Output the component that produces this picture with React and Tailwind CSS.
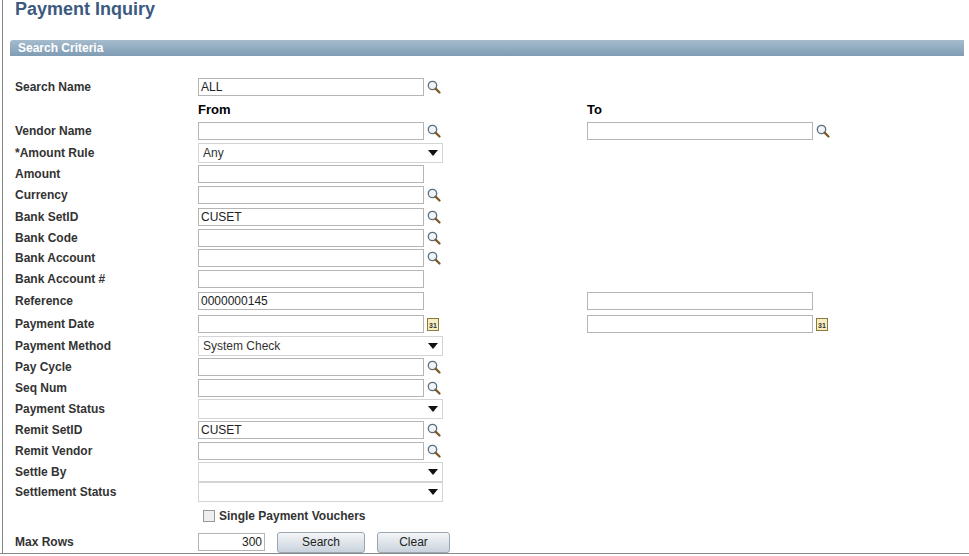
const F = { fontFamily: 'Arial, "Liberation Sans", sans-serif' };

function Lookup() {
  return (
    <svg width="14" height="14" viewBox="0 0 14 14" className="ml-[3px]">
      <circle cx="5.5" cy="5.5" r="4.2" fill="#eef4f8" stroke="#5b6f7e" strokeWidth="1.3" />
      <line x1="8.6" y1="8.6" x2="12.5" y2="12.5" stroke="#7a5a2a" strokeWidth="2.2" strokeLinecap="round" />
    </svg>
  );
}

function Cal() {
  return (
    <svg width="12" height="14" viewBox="0 0 12 14" className="ml-[3px]">
      <rect x="0.5" y="1.5" width="11" height="12" fill="#f6eec0" stroke="#8a7a3a" />
      <text x="2" y="11" fontSize="7" fontWeight="bold" fill="#333" style={F}>31</text>
    </svg>
  );
}

function Input({ value = '', w = 'w-[226px]', right, icon }) {
  return (
    <div className="flex items-center">
      <div className={`${w} h-[18px] border border-[#b5b5b5] bg-white text-[12px] text-[#222] px-[2px] leading-[16px] ${right ? 'text-right' : ''}`}>{value}</div>
      {icon === 'l' && <Lookup />}
      {icon === 'c' && <Cal />}
    </div>
  );
}

function Select({ value = '' }) {
  return (
    <div className="w-[245px] h-[20px] border border-[#d4d4d4] bg-white text-[12px] text-[#333] px-[4px] flex items-center justify-between">
      <span>{value}</span>
      <svg width="10" height="6" viewBox="0 0 10 6"><path d="M0 0h10L5 6z" fill="#111" /></svg>
    </div>
  );
}

const rows = [
  ['Search Name', <Input value="ALL" icon="l" />, null, 20],
  ['', <span className="text-[13px] font-bold text-black">From</span>, <span className="text-[13px] font-bold text-black">To</span>, 23],
  ['Vendor Name', <Input icon="l" />, <Input icon="l" />, 22],
  ['*Amount Rule', <Select value="Any" />, null, 21],
  ['Amount', <Input />, null, 21],
  ['Currency', <Input icon="l" />, null, 21],
  ['Bank SetID', <Input value="CUSET" icon="l" />, null, 23],
  ['Bank Code', <Input icon="l" />, null, 20],
  ['Bank Account', <Input icon="l" />, null, 20],
  ['Bank Account #', <Input />, null, 21],
  ['Reference', <Input value="0000000145" />, <Input />, 24],
  ['Payment Date', <Input icon="c" />, <Input icon="c" />, 22],
  ['Payment Method', <Select value="System Check" />, null, 21],
  ['Pay Cycle', <Input icon="l" />, null, 21],
  ['Seq Num', <Input icon="l" />, null, 22],
  ['Payment Status', <Select />, null, 20],
  ['Remit SetID', <Input value="CUSET" icon="l" />, null, 21],
  ['Remit Vendor', <Input icon="l" />, null, 21],
  ['Settle By', <Select />, null, 21],
  ['Settlement Status', <Select />, null, 20],
  ['', <div className="flex items-center gap-[4px] pl-[5px]"><div className="w-[12px] h-[12px] border border-[#999] bg-[#eee]" /><span className="text-[12px] font-bold text-[#333]">Single Payment Vouchers</span></div>, null, 28],
];

export default function App() {
  return (
    <div className="w-[969px] h-[556px] bg-white relative overflow-hidden" style={F}>
      <div className="absolute left-[2px] top-0 bottom-[3px] w-px bg-[#888]" />
      <div className="absolute left-0 right-0 bottom-[2px] h-px bg-[#888]" />
      <h1 className="text-[18px] font-bold text-[#3b5a80] pl-[15px] pt-0 leading-[18px]">Payment Inquiry</h1>
      <div className="ml-[10px] w-[954px] mt-[22px] h-[16px] bg-gradient-to-b from-[#a6bccd] to-[#7f9cb4] rounded-tl-[3px] text-[12px] font-bold text-white pl-[8px] leading-[16px]">Search Criteria</div>
      <div className="mt-[21px] flex flex-col">
        {rows.map(([label, a, b, h], i) => (
          <div key={i} className="flex items-center" style={{ height: h }}>
            <div className="w-[198px] pl-[15px] text-[12px] font-bold text-[#333]">{label}</div>
            <div className="w-[389px]">{a}</div>
            <div>{b}</div>
          </div>
        ))}
        <div className="flex items-center h-[24px]">
          <div className="w-[198px] pl-[15px] text-[12px] font-bold text-[#333]">Max Rows</div>
          <Input value="300" w="w-[67px]" right />
          <button className="ml-[12px] w-[88px] h-[21px] border border-[#9aa6b2] rounded-[3px] bg-gradient-to-b from-[#f4f6f8] to-[#c9d3dd] text-[12px] text-[#222]">Search</button>
          <button className="ml-[12px] w-[73px] h-[21px] border border-[#9aa6b2] rounded-[3px] bg-gradient-to-b from-[#f4f6f8] to-[#c9d3dd] text-[12px] text-[#222]">Clear</button>
        </div>
      </div>
    </div>
  );
}
